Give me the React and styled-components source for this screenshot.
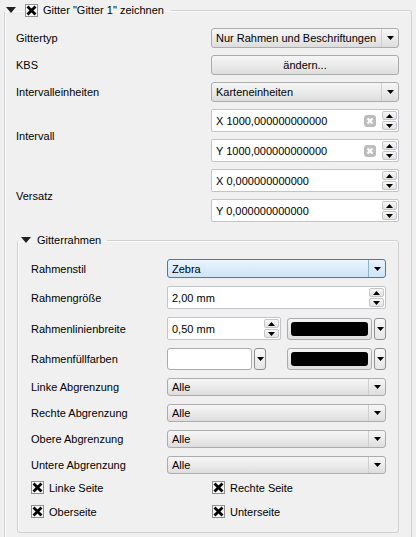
import React from 'react';
import styled, { createGlobalStyle } from 'styled-components';

const GlobalStyle = createGlobalStyle`
  html, body {
    margin: 0;
    padding: 0;
    background: #f0f0f0;
  }
  body {
    font-family: "Liberation Sans", Arial, sans-serif;
    font-size: 11px;
    color: #000;
    overflow: hidden;
  }
`;

const Page = styled.div`
  width: 416px;
  height: 537px;
  overflow: hidden;
  box-sizing: border-box;
  padding: 2px 0 0 4px;
`;

const Group = styled.fieldset`
  margin: ${p => p.$margin || '0'};
  padding: 0;
  min-width: 0;
  width: ${p => p.$width}px;
  box-sizing: border-box;
  border: 1px solid #d0d0d0;
  border-radius: 3px;
  box-shadow: inset 1px 1px 0 #fafafa;
`;

const Legend = styled.legend`
  display: flex;
  align-items: center;
  height: 16px;
  padding: 0 ${p => p.$padRight}px 0 ${p => p.$padLeft}px;
  gap: ${p => p.$gap}px;
  font-size: 11px;
`;

const GroupBody = styled.div`
  display: grid;
  grid-template-columns: ${p => p.$cols};
  row-gap: ${p => p.$gap}px;
  padding: ${p => p.$pad};
  align-items: center;
`;

const Label = styled.div`
  white-space: nowrap;
  grid-row: ${p => (p.$span ? `span ${p.$span}` : 'auto')};
`;

const Combo = styled.div`
  display: flex;
  height: ${p => p.$h}px;
  box-sizing: border-box;
  border: 1px solid ${p => (p.$focus ? '#3c7fb1' : '#acacac')};
  border-radius: 3px;
  background: ${p =>
    p.$focus
      ? 'linear-gradient(#eaf4fc, #dcecfa 50%, #cfe5f8)'
      : 'linear-gradient(#f6f6f6, #ebebeb 50%, #dddddd)'};
`;

const ComboText = styled.span`
  flex: 1;
  display: flex;
  align-items: center;
  justify-content: ${p => (p.$center ? 'center' : 'flex-start')};
  padding-left: ${p => (p.$center ? 0 : 4)}px;
  white-space: nowrap;
`;

const ComboArrow = styled.span`
  width: 16px;
  display: flex;
  align-items: center;
  justify-content: center;
  border-left: 1px solid ${p => (p.$focus ? '#8ab4d8' : '#cfcfcf')};
`;

const Spin = styled.div`
  display: flex;
  height: 23px;
  width: ${p => (p.$w ? `${p.$w}px` : 'auto')};
  box-sizing: border-box;
  border: 1px solid #c2c4c9;
  border-radius: 2px;
  background: #fff;
`;

const SpinText = styled.span`
  flex: 1;
  display: flex;
  align-items: center;
  padding-left: 4px;
  white-space: nowrap;
`;

const ClearIcon = styled.span`
  width: 12px;
  display: flex;
  align-items: center;
  margin-right: 6px;
`;

const SpinButtons = styled.div`
  width: 15px;
  display: flex;
  flex-direction: column;
  gap: 1px;
  padding: 1px 1px 1px 0;
`;

const SpinButton = styled.span`
  flex: 1;
  display: flex;
  align-items: center;
  justify-content: center;
  border: 1px solid #c6c6c6;
  border-radius: 2px;
  background: linear-gradient(#f8f8f8, #e2e2e2);
`;

const Pair = styled.div`
  display: flex;
  justify-content: space-between;
  align-items: center;
`;

const ColorWrap = styled.div`
  display: flex;
  gap: 2px;
  height: 22px;
  width: ${p => p.$w}px;
`;

const ColorButton = styled.div`
  flex: 1;
  box-sizing: border-box;
  border: 1px solid #acacac;
  border-radius: 3px;
  padding: ${p => (p.$white ? 0 : 3)}px;
  background: ${p => (p.$white ? '#fff' : 'linear-gradient(#f4f4f4, #e0e0e0)')};
`;

const Swatch = styled.div`
  height: 100%;
  border-radius: 3px;
  background: ${p => p.$color};
`;

const ToolArrow = styled.div`
  width: 12px;
  box-sizing: border-box;
  border: 1px solid #8e8f8f;
  border-radius: 3px;
  background: linear-gradient(#f8f8f8, #e6e6e6);
  display: flex;
  align-items: center;
  justify-content: center;
`;

const Wide = styled.div`
  grid-column: 1 / -1;
`;

const Checks = styled.div`
  grid-column: 1 / -1;
  display: grid;
  grid-template-columns: 181px 1fr;
  grid-auto-rows: 17px;
  row-gap: 7px;
  margin-top: -3px;
`;

const Check = styled.div`
  display: flex;
  align-items: center;
  gap: 5px;
  white-space: nowrap;
`;

const Spacer = styled.span`
  width: ${p => p.$w}px;
`;

const Arrow = ({ w = 7, h = 4 }) => (
  <svg width={w} height={h} viewBox={`0 0 ${w} ${h}`}>
    <polygon points={`0,0 ${w},0 ${w / 2},${h}`} fill="#000" />
  </svg>
);

const UpArrow = () => (
  <svg width="7" height="4" viewBox="0 0 7 4">
    <polygon points="0,4 7,4 3.5,0" fill="#000" />
  </svg>
);

const Triangle = () => (
  <svg width="10" height="6" viewBox="0 0 10 6">
    <polygon points="0,0 10,0 5,6" fill="#222" />
  </svg>
);

const CheckBox = () => (
  <svg width="13" height="13" viewBox="0 0 13 13">
    <rect x="0.5" y="0.5" width="12" height="12" fill="#fafafa" stroke="#8f8f8f" />
    <path d="M3.5 3.5 L9.5 9.5 M9.5 3.5 L3.5 9.5" stroke="#000" strokeWidth="2.8" strokeLinecap="square" />
  </svg>
);

const Clear = () => (
  <svg width="12" height="12" viewBox="0 0 12 12">
    <rect x="0" y="0" width="12" height="12" rx="3" fill="#bdbdbd" />
    <path d="M3.5 3.5 L8.5 8.5 M8.5 3.5 L3.5 8.5" stroke="#fff" strokeWidth="2" />
  </svg>
);

const ComboBox = ({ text, h = 20, focus }) => (
  <Combo $h={h} $focus={focus}>
    <ComboText>{text}</ComboText>
    <ComboArrow $focus={focus}><Arrow /></ComboArrow>
  </Combo>
);

const SpinBox = ({ text, clear, w }) => (
  <Spin $w={w}>
    <SpinText>{text}</SpinText>
    {clear && <ClearIcon><Clear /></ClearIcon>}
    <SpinButtons>
      <SpinButton><UpArrow /></SpinButton>
      <SpinButton><Arrow /></SpinButton>
    </SpinButtons>
  </Spin>
);

const ColorPicker = ({ color, w = 99 }) => {
  const white = color === '#ffffff';
  return (
    <ColorWrap $w={w}>
      <ColorButton $white={white}>
        {!white && <Swatch $color={color} />}
      </ColorButton>
      <ToolArrow><Arrow /></ToolArrow>
    </ColorWrap>
  );
};

const bounds = ['Linke Abgrenzung', 'Rechte Abgrenzung', 'Obere Abgrenzung', 'Untere Abgrenzung'];

export default function App() {
  return (
    <Page>
      <GlobalStyle />
      <Group $width={408}>
        <Legend $padLeft={1} $padRight={7} $gap={0}>
          <Triangle />
          <Spacer $w={9} />
          <CheckBox />
          <Spacer $w={5} />
          <span>Gitter "Gitter 1" zeichnen</span>
        </Legend>
        <GroupBody $cols="195px 188px" $gap={7} $pad="10px 12px 40px 11px">
          <Label>Gittertyp</Label>
          <ComboBox text="Nur Rahmen und Beschriftungen" />
          <Label>KBS</Label>
          <Combo $h={20}>
            <ComboText $center>ändern...</ComboText>
          </Combo>
          <Label>Intervalleinheiten</Label>
          <ComboBox text="Karteneinheiten" />
          <Label $span={2}>Intervall</Label>
          <SpinBox text="X 1000,000000000000" clear />
          <SpinBox text="Y 1000,000000000000" clear />
          <Label $span={2}>Versatz</Label>
          <SpinBox text="X 0,000000000000" />
          <SpinBox text="Y 0,000000000000" />
          <Wide>
            <Group $width={382} $margin="3px 0 0 1px">
              <Legend $padLeft={3} $padRight={6} $gap={6}>
                <Triangle />
                <span>Gitterrahmen</span>
              </Legend>
              <GroupBody $cols="136px 219px" $gap={8} $pad="11px 12px 12px 13px">
                <Label>Rahmenstil</Label>
                <ComboBox text="Zebra" h={19} focus />
                <Label>Rahmengröße</Label>
                <SpinBox text="2,00 mm" />
                <Label>Rahmenlinienbreite</Label>
                <Pair>
                  <SpinBox text="0,50 mm" w={114} />
                  <ColorPicker color="#000000" />
                </Pair>
                <Label>Rahmenfüllfarben</Label>
                <Pair>
                  <ColorPicker color="#ffffff" />
                  <ColorPicker color="#000000" />
                </Pair>
                {bounds.map(b => (
                  <React.Fragment key={b}>
                    <Label>{b}</Label>
                    <ComboBox text="Alle" h={18} />
                  </React.Fragment>
                ))}
                <Checks>
                  <Check><CheckBox />Linke Seite</Check>
                  <Check><CheckBox />Rechte Seite</Check>
                  <Check><CheckBox />Oberseite</Check>
                  <Check><CheckBox />Unterseite</Check>
                </Checks>
              </GroupBody>
            </Group>
          </Wide>
        </GroupBody>
      </Group>
    </Page>
  );
}
